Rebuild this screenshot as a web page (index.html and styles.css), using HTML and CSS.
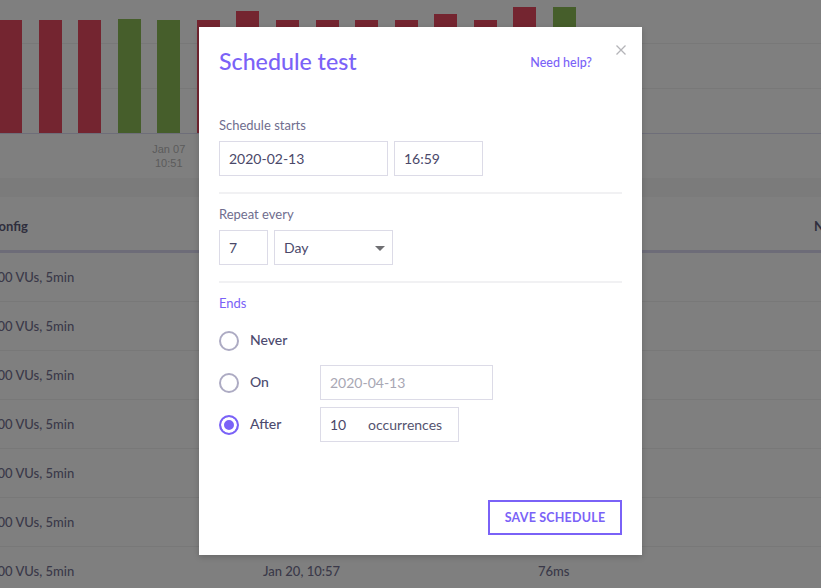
FILE: index.html
```html
<!DOCTYPE html>
<html lang="en">
<head>
<meta charset="utf-8">
<title>Schedule test</title>
<link rel="stylesheet" href="styles.css">
</head>
<body>
<div class="page">
  <section class="chart">
    <div class="plot">
      <div class="bars">
        <span class="bar bad" style="height:113px"></span>
        <span class="bar bad" style="height:113px"></span>
        <span class="bar bad" style="height:113px"></span>
        <span class="bar good" style="height:114px"></span>
        <span class="bar good" style="height:113px"></span>
        <span class="bar bad" style="height:113px"></span>
        <span class="bar bad" style="height:122px"></span>
        <span class="bar bad" style="height:113px"></span>
        <span class="bar bad" style="height:113px"></span>
        <span class="bar bad" style="height:113px"></span>
        <span class="bar bad" style="height:113px"></span>
        <span class="bar bad" style="height:119px"></span>
        <span class="bar bad" style="height:113px"></span>
        <span class="bar bad" style="height:126px"></span>
        <span class="bar good" style="height:126px"></span>
      </div>
    </div>
    <div class="xlabels">
      <span class="slot"></span><span class="slot"></span><span class="slot"></span><span class="slot"></span>
      <span class="slot"><span class="tick">Jan 07<br>10:51</span></span>
      <span class="slot"></span><span class="slot"></span><span class="slot"></span><span class="slot"></span>
      <span class="slot"><span class="tick">Jan 12<br>10:53</span></span>
      <span class="slot"></span><span class="slot"></span><span class="slot"></span><span class="slot"></span>
      <span class="slot"><span class="tick">Jan 17<br>10:55</span></span>
    </div>
  </section>
  <div class="band"></div>
  <table class="runs">
    <colgroup><col class="c1"><col class="c2"><col class="c3"><col class="c4"></colgroup>
    <thead>
      <tr><th>Config</th><th>Started</th><th>Response time</th><th>Notes</th></tr>
    </thead>
    <tbody>
      <tr><td>100 VUs, 5min</td><td>Jan 14, 10:51</td><td>74ms</td><td></td></tr>
      <tr><td>100 VUs, 5min</td><td>Jan 15, 10:52</td><td>75ms</td><td></td></tr>
      <tr><td>100 VUs, 5min</td><td>Jan 16, 10:53</td><td>73ms</td><td></td></tr>
      <tr><td>100 VUs, 5min</td><td>Jan 17, 10:54</td><td>77ms</td><td></td></tr>
      <tr><td>100 VUs, 5min</td><td>Jan 18, 10:55</td><td>75ms</td><td></td></tr>
      <tr><td>100 VUs, 5min</td><td>Jan 19, 10:56</td><td>74ms</td><td></td></tr>
      <tr><td>100 VUs, 5min</td><td>Jan 20, 10:57</td><td>76ms</td><td></td></tr>
    </tbody>
  </table>
</div>

<div class="backdrop"></div>

<div class="modal" role="dialog" aria-labelledby="dlg-title">
  <button class="close" aria-label="Close">
    <svg width="10" height="10" viewBox="0 0 10 10"><path d="M0.5 0.5L9.5 9.5M9.5 0.5L0.5 9.5" stroke="#b4b4b8" stroke-width="1.3" fill="none"/></svg>
  </button>
  <div class="modal-head">
    <h1 id="dlg-title" class="title">Schedule test</h1>
    <a class="help">Need help?</a>
  </div>

  <div class="section">
    <div class="field-label">Schedule starts</div>
    <div class="row">
      <input class="input w-date" type="text" value="2020-02-13" readonly>
      <input class="input w-time" type="text" value="16:59" readonly>
    </div>
  </div>

  <div class="section">
    <div class="field-label">Repeat every</div>
    <div class="row">
      <input class="input w-num" type="text" value="7" readonly>
      <div class="input select w-unit"><span>Day</span>
        <svg class="caret" width="10" height="5" viewBox="0 0 10 5"><path d="M0 0H10L5 5Z" fill="#6f6f72"/></svg>
      </div>
    </div>
  </div>

  <div class="section last">
    <div class="field-label accent">Ends</div>
    <div class="options">
      <div class="opt">
        <div class="opt-label"><span class="radio"></span><span>Never</span></div>
      </div>
      <div class="opt">
        <div class="opt-label"><span class="radio"></span><span>On</span></div>
        <input class="input w-end muted" type="text" value="2020-04-13" readonly>
      </div>
      <div class="opt">
        <div class="opt-label"><span class="radio checked"></span><span>After</span></div>
        <div class="input w-count"><span class="count">10</span><span class="unit">occurrences</span></div>
      </div>
    </div>
  </div>

  <div class="actions">
    <button class="save">Save schedule</button>
  </div>
</div>
</body>
</html>
```

FILE: styles.css
```css
html, body {
  margin: 0;
  padding: 0;
}
body {
  width: 821px;
  height: 588px;
  overflow: hidden;
  position: relative;
  background: #ffffff;
  font-family: Lato, "Noto Sans", sans-serif;
}

/* ---------- background page ---------- */
.page {
  width: 821px;
}
.chart {
  height: 178px;
  overflow: hidden;
}
.plot {
  height: 133px;
  border-bottom: 1px solid #dcdcf2;
  background-image: repeating-linear-gradient(to top, transparent 0 44px, #f0f0f0 44px 45px);
}
.bars {
  display: flex;
  align-items: flex-end;
  height: 133px;
  margin-left: -1px;
  gap: 16.57px;
}
.bar {
  width: 23px;
  flex: none;
}
.bar.bad { background: #e84a60; }
.bar.good { background: #8cbc56; }

.xlabels {
  display: flex;
  margin-left: -1px;
  gap: 16.57px;
  padding-top: 8px;
}
.slot {
  width: 23px;
  flex: none;
  display: flex;
  justify-content: center;
}
.tick {
  white-space: nowrap;
  text-align: center;
  font-family: "Liberation Sans", Arial, sans-serif;
  font-size: 11px;
  line-height: 14px;
  color: #b8b8b8;
}

.band {
  height: 19px;
  background: #f6f6f6;
}

.runs {
  border-collapse: collapse;
  table-layout: fixed;
  width: 1100px;
  margin-left: -10px;
  font-size: 13px;
}
.runs .c1 { width: 273px; }
.runs .c2 { width: 275px; }
.runs .c3 { width: 276px; }
.runs th {
  height: 48px;
  padding: 5px 0 0;
  text-align: left;
  font-weight: 700;
  color: #5e5c7a;
  border-bottom: 3px solid #dad8f0;
}
.runs td {
  height: 48px;
  padding: 0;
  color: #757392;
  font-weight: 500;
  border-bottom: 1px solid #f0f0f0;
  white-space: nowrap;
}

/* ---------- overlay ---------- */
.backdrop {
  position: absolute;
  inset: 0;
  background: rgba(0, 0, 0, 0.5);
}

.modal {
  position: absolute;
  left: 199px;
  top: 27px;
  width: 443px;
  height: 528px;
  box-sizing: border-box;
  padding: 16px 20px 20px;
  background: #ffffff;
  box-shadow: 0 2px 6px rgba(0, 0, 0, 0.18);
  display: flex;
  flex-direction: column;
  color: #4a4869;
}
.close {
  position: absolute;
  right: 16px;
  top: 18px;
  width: 10px;
  height: 10px;
  padding: 0;
  border: 0;
  background: none;
  line-height: 0;
}
.modal-head {
  display: flex;
  align-items: center;
  justify-content: space-between;
  padding-right: 30px;
  margin-bottom: 26px;
  height: 36px;
}
.title {
  margin: 0;
  font-size: 23.2px;
  line-height: 30px;
  font-weight: 500;
  color: #7a62f7;
}
.help {
  font-size: 12.5px;
  font-weight: 500;
  color: #7a62f7;
  padding-top: 2px;
}

.section {
  padding: 12px 0 16px;
  border-bottom: 2px solid #f1f1f3;
}
.section.last {
  border-bottom: 0;
  padding-bottom: 0;
}
.field-label {
  font-size: 13px;
  line-height: 16px;
  color: #6f6d8e;
  margin-bottom: 8px;
}
.field-label.accent {
  color: #7a62f7;
  margin-bottom: 12px;
}
.row {
  display: flex;
  gap: 6px;
}
.input {
  height: 35px;
  box-sizing: border-box;
  border: 1px solid #dcdbe7;
  padding: 0 9px;
  margin: 0;
  font-family: inherit;
  font-size: 14px;
  color: #4a4869;
  background: #fff;
  display: flex;
  align-items: center;
  outline: none;
  border-radius: 0;
}
.w-date { width: 169px; }
.w-time { width: 89px; }
.w-num { width: 49px; }
.w-unit { width: 119px; justify-content: space-between; padding-right: 7px; }
.w-end { width: 173px; }
.w-count { width: 139px; }
.muted { color: #a8a7b4; }
.caret { display: block; margin-top: 1px; }

.options {
  display: flex;
  flex-direction: column;
  gap: 7px;
}
.opt {
  display: flex;
  align-items: center;
  height: 35px;
}
.opt-label {
  width: 101px;
  display: flex;
  align-items: center;
  gap: 11px;
  font-size: 14px;
  font-weight: 500;
  color: #4d4b6f;
}
.opt-label span:last-child {
  margin-top: -2px;
}
.radio {
  width: 20px;
  height: 20px;
  box-sizing: border-box;
  border: 2px solid #adabc3;
  border-radius: 50%;
  flex: none;
}
.radio.checked {
  border-color: #7a62f7;
  background: #7a62f7;
  box-shadow: inset 0 0 0 3px #fff;
}
.count { width: 38px; }
.unit { color: #55536f; }

.actions {
  margin-top: auto;
  display: flex;
  justify-content: flex-end;
}
.save {
  width: 134px;
  height: 35px;
  box-sizing: border-box;
  border: 2px solid #7a62f7;
  background: #fff;
  color: #7a62f7;
  font-family: inherit;
  font-size: 12.5px;
  font-weight: 700;
  text-transform: uppercase;
  letter-spacing: 0.2px;
  padding: 0;
  border-radius: 0;
}
```
